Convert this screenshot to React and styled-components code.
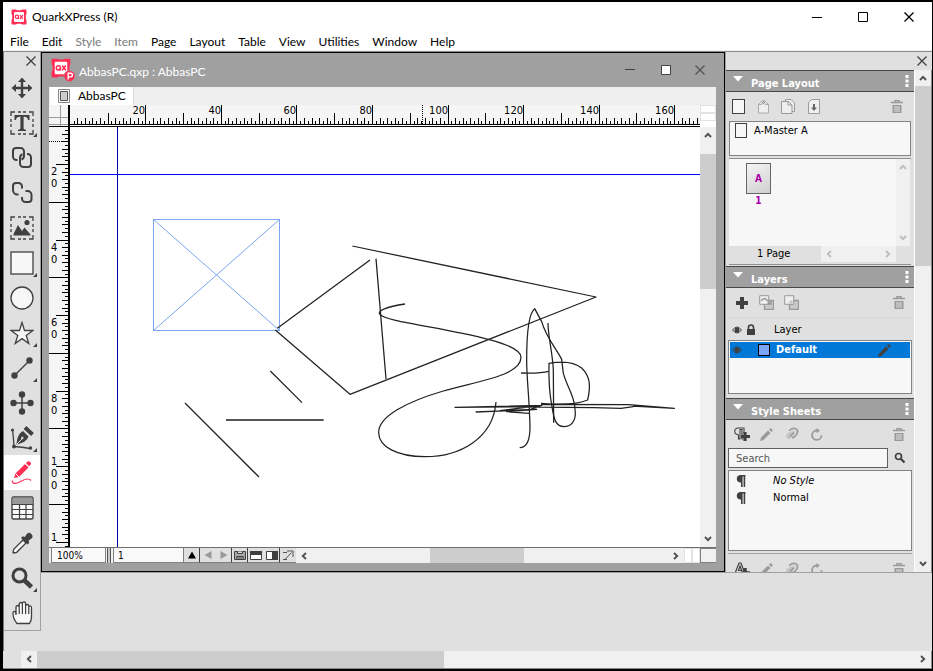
import React, { useEffect, useRef, useState } from "react";
import styled, { createGlobalStyle } from "styled-components";

const Global = createGlobalStyle`
  *, *::before, *::after { box-sizing: border-box; }
  html, body { margin: 0; padding: 0; background: #000; }
  button, input { font: inherit; color: inherit; border: 0; padding: 0; margin: 0; background: none; border-radius: 0; }
  ul { list-style: none; margin: 0; padding: 0; }
  h2, p { margin: 0; }
  svg { display: block; }
`;

const ui = `"Lato", "Open Sans", sans-serif`;
const panelFont = `"DejaVu Sans Condensed", "DejaVu Sans", sans-serif`;
const ink = "#404040";
const dim = "#9a9a9a";

const AppWindow = styled.div`
  display: flex;
  flex-direction: column;
  height: 100vh;
  min-height: 640px;
  border: solid #000;
  border-width: 2px 1px 2px 3px;
  background: #e0e0e0;
  font: 12px/16px ${ui};
  color: #000;
  overflow: hidden;
`;

const TitleBar = styled.header`
  display: flex;
  align-items: center;
  height: 29px;
  padding-left: 8px;
  background: #fff;
  flex: none;
`;

const WindowTitle = styled.span`
  flex: 1;
  padding-left: 5px;
`;

const CaptionButton = styled.button`
  display: grid;
  place-items: center;
  width: 46px;
  height: 29px;
`;

const MenuBar = styled.nav`
  display: flex;
  align-items: center;
  gap: 13px;
  height: 20px;
  padding: 2px 0 0 7px;
  background: #fff;
  border-bottom: 1px solid #f0f0f0;
  flex: none;
`;

const MenuItem = styled.button`
  color: ${(p) => (p.disabled ? "#7a7a7a" : "#000")};
`;

const Client = styled.div`
  display: flex;
  align-items: flex-start;
  flex: 1;
  min-height: 0;
  border-top: 1px solid #8c8c8c;
  border-left: 1px solid #777;
`;

const Toolbox = styled.div`
  display: flex;
  flex-direction: column;
  width: 37px;
  border-right: 1px solid #a0a0a0;
  border-bottom: 1px solid #a0a0a0;
  flex: none;
`;

const CloseRow = styled.div`
  display: flex;
  justify-content: flex-end;
  align-items: center;
  height: 18px;
  padding: 0 ${(p) => p.$inset}px;
  flex: none;
`;

const PlainButton = styled.button`
  display: grid;
  place-items: center;
`;

const Tool = styled.button`
  position: relative;
  display: grid;
  place-items: center;
  height: 35px;
  padding-right: 1px;
  background: ${(p) => (p.$active ? "#fff" : "transparent")};
  ${(p) =>
    p.$more &&
    `&::after {
      content: "";
      position: absolute;
      right: 3px;
      bottom: 3px;
      border-left: 4px solid transparent;
      border-bottom: 4px solid ${ink};
    }`}
`;

const Main = styled.div`
  display: flex;
  flex-direction: column;
  flex: 1;
  align-self: stretch;
  min-width: 0;
`;

const Workspace = styled.div`
  display: flex;
  flex: 1;
  min-height: 0;
  border-bottom: 1px solid #a0a0a0;
`;

const Desk = styled.div`
  height: 78px;
  flex: none;
`;

const DocWindow = styled.section`
  display: flex;
  flex-direction: column;
  flex: 1;
  min-width: 0;
  border: 1px solid #000;
  background: #a0a0a0;
  padding: 0 8px 8px 7px;
`;

const DocTitle = styled.div`
  display: flex;
  align-items: center;
  height: 34px;
  color: #fff;
  padding-left: 2px;
  flex: none;
`;

const DocName = styled(WindowTitle)`
  padding-top: 3px;
  padding-left: 4px;
`;

const DocButton = styled(CaptionButton)`
  width: 36px;
  height: 34px;
  &:last-child { width: 32px; }
`;

const TabRow = styled.div`
  display: flex;
  height: 18px;
  padding-left: 1px;
  background: #efefef;
  flex: none;
`;

const Tab = styled.button`
  display: flex;
  align-items: center;
  gap: 8px;
  padding: 0 7px 0 8px;
  background: #fff;
  border-right: 1px solid #d8d8d8;
`;

const DocGrid = styled.div`
  display: grid;
  grid-template: 22px 1fr / 21px 1fr 16px;
  flex: 1;
  min-height: 0;
  background: #f5f5f5;
`;

const RulerCell = styled.div`
  overflow: hidden;
  min-width: 0;
  min-height: 0;
  contain: size;
`;

const Canvas = styled.div`
  overflow: hidden;
  min-height: 0;
  background: #fff;
  contain: size;
`;

const RulerText = styled.text`
  font: 11px ${panelFont};
`;

const Splits = styled.div`
  display: grid;
  grid-template: ${(p) => (p.$across ? "1fr / 8px 8px" : "8px 8px / 1fr")};
  background: #fff;
  flex: none;
`;

const Split = styled.span`
  border: 1px solid #e2e2e2;
`;

const VScroll = styled.div`
  display: flex;
  flex-direction: column;
  width: ${(p) => p.$size || 16}px;
  background: #f0f0f0;
  min-height: 0;
  flex: none;
`;

const HScroll = styled.div`
  display: flex;
  height: ${(p) => p.$size || 15}px;
  background: #f0f0f0;
  min-width: 0;
  flex: 1;
`;

const Arrow = styled.button`
  display: grid;
  place-items: center;
  width: 100%;
  max-width: 16px;
  height: 16px;
  color: ${(p) => (p.disabled ? "#bdbdbd" : "#505050")};
  flex: none;
`;

const Track = styled.div`
  display: flex;
  flex-direction: ${(p) => (p.$across ? "row" : "column")};
  flex: 1;
  min-width: 0;
  min-height: 0;
`;

const Lead = styled.span`
  flex: ${(p) => p.$part} 1 0;
`;

const Thumb = styled.span`
  flex: ${(p) => p.$part} 1 0;
  background: #cdcdcd;
`;

const StatusBar = styled.div`
  display: flex;
  height: 16px;
  border-top: 1px solid #6e6e6e;
  background: #f0f0f0;
  font: 10px/14px ${panelFont};
  flex: none;
`;

const ZoomField = styled.input`
  width: 55px;
  margin-left: 2px;
  padding: 1px 0 0 5px;
  border: 1px solid #808080;
  border-top: 0;
  background: #f9f9f9;
`;

const Divider = styled.span`
  width: 4px;
  margin: 0 2px 0 1px;
  border: solid #555;
  border-width: 0 1px;
  background: #c8c8c8;
`;

const PageField = styled.input`
  width: 71px;
  padding: 1px 0 0 4px;
  border: 1px solid #808080;
  border-top: 0;
  background: #f9f9f9;
`;

const StatusButton = styled.button`
  display: grid;
  place-items: center;
  width: 16px;
  height: 15px;
  background: #e0e0e0;
  border-right: ${(p) => (p.$edge ? "1px solid #404040" : "0")};
  border-bottom: 1px solid #808080;
`;

const Corner = styled.span`
  width: 16px;
  border: 1px solid #808080;
  border-right: 0;
  background: #f0f0f0;
`;

const Palettes = styled.aside`
  display: flex;
  flex-direction: column;
  width: 207px;
  border-left: 1px solid #a0a0a0;
  flex: none;
`;

const PaletteScroll = styled.div`
  display: flex;
  flex: 1;
  min-height: 0;
  border-right: 1px solid #888;
`;

const PaletteStack = styled.div`
  flex: 1;
  height: 100%;
  overflow: hidden;
  font: 11px/14px ${panelFont};
  border-right: 1px solid #fff;
`;

const Panel = styled.section`
  display: flex;
  flex-direction: column;
  height: ${(p) => p.$height}px;
`;

const PanelHead = styled.header`
  display: flex;
  align-items: center;
  gap: 8px;
  height: 22px;
  padding: 0 5px 0 7px;
  border: solid #484848;
  border-width: 1px 0;
  background: #a0a0a0;
  color: #fff;
  flex: none;
`;

const PanelTitle = styled.h2`
  flex: 1;
  font: bold 11px/14px ${panelFont};
  padding-top: 6px;
`;

const Fold = styled.button`
  width: 10px;
  height: 10px;
  margin-bottom: 4px;
`;

const IconRow = styled.div`
  display: flex;
  align-items: center;
  gap: 8px;
  height: ${(p) => p.$height || 29}px;
  padding: 0 ${(p) => p.$right || 7}px 0 ${(p) => p.$left || 7}px;
  flex: none;
  > :last-child { margin-left: auto; }
`;

const IconButton = styled.button`
  display: grid;
  place-items: center;
  width: 17px;
  height: 18px;
`;

const MasterList = styled.ul`
  height: 35px;
  margin: 0 3px;
  border: 1px solid #808488;
  background: #f7f7f7;
`;

const MasterItem = styled.li`
  display: flex;
  align-items: center;
  gap: 7px;
  padding: 1px 5px;
`;

const PageArea = styled.div`
  display: grid;
  grid-template: 87px 16px / 92px 1fr 14px;
  margin: 2px 3px 0;
  padding: 0 1px 2px 0;
  border: solid #909090;
  border-width: 1px 0;
`;

const PageView = styled.div`
  grid-column: span 2;
  background: #f7f7f7;
  padding: 4px 17px;
`;

const PageThumb = styled.button`
  display: flex;
  flex-direction: column;
  align-items: center;
  color: #a800a8;
  font: bold 10px/14px ${panelFont};
`;

const PageSheet = styled.span`
  display: grid;
  place-items: center;
  width: 25px;
  height: 31px;
  border: 1px solid #666;
  background: linear-gradient(150deg, #f4f4f4, #cfcfcf);
`;

const PageCount = styled.p`
  padding-left: 28px;
  line-height: 16px;
`;

const LayerHead = styled.div`
  display: flex;
  align-items: center;
  gap: 4px;
  height: 23px;
  padding: 2px 0 0 4px;
  margin: 0 2px;
  border-top: 1px solid #d8d8d8;
  flex: none;
`;

const LayerLabel = styled.span`
  margin-left: 14px;
`;

const ListBox = styled.ul`
  height: ${(p) => p.$height}px;
  margin: 0 2px;
  border: 1px solid #808488;
  background: #f7f7f7;
  padding: 1px;
  flex: none;
`;

const LayerItem = styled.li`
  display: flex;
  align-items: center;
  height: 16px;
  padding: 0 19px 0 2px;
  background: #0078d7;
  color: #fff;
  font-weight: bold;
`;

const Swatch = styled.span`
  width: 12px;
  height: 12px;
  margin: 0 6px 0 16px;
  border: 1px solid #000;
  background: #7ba5f5;
`;

const LayerName = styled.span`
  flex: 1;
`;

const SearchRow = styled.label`
  display: flex;
  align-items: center;
  gap: 6px;
  height: 20px;
  margin: 0 2px 2px;
`;

const SearchInput = styled.input`
  width: 160px;
  height: 20px;
  padding: 0 7px;
  border: 1px solid #606060;
  background: #f7f7f7;
  &::placeholder { color: #555; opacity: 1; }
`;

const StyleItem = styled.li`
  display: flex;
  align-items: center;
  gap: 27px;
  height: 17px;
  padding-left: 6px;
  font-style: ${(p) => (p.$italic ? "italic" : "normal")};
`;

const Rule = styled.hr`
  width: calc(100% - 4px);
  margin: 1px 2px;
  border: 0;
  border-top: 1px solid #a0a0a0;
`;

const BottomBar = styled.div`
  display: flex;
  height: 18px;
  padding-left: 18px;
  border: solid #888;
  border-width: 0 1px 1px 0;
  flex: none;
`;

/* ---------- icons ---------- */

const Svg = ({ s = 24, w, h, children, ...rest }) => (
  <svg width={w || s} height={h || s} viewBox={`0 0 ${w || s} ${h || s}`} fill="none" stroke={ink} aria-hidden="true" {...rest}>
    {children}
  </svg>
);

const Chevron = ({ dir }) => {
  const d = { up: "M1 6l3-3.200 3 3.200", down: "M1 2l3 3.200 3-3.200", left: "M6 1L2.800 4 6 7", right: "M2 1l3.200 3-3.200 3" }[dir];
  return <Svg s={8} stroke="currentColor" strokeWidth="1.900"><path d={d} /></Svg>;
};

const Cross = ({ s = 10, color = ink }) => (
  <Svg s={s} stroke={color} strokeWidth="1.3"><path d={`M.5 .5L${s - 0.5} ${s - 0.5}M${s - 0.5} .5L.5 ${s - 0.5}`} /></Svg>
);

const QxLogo = ({ s, badge }) => (
  <svg width={badge ? 24 : s} height={badge ? 24 : s} viewBox={badge ? "0 0 24 24" : "0 0 16 16"} fill="none" aria-hidden="true">
    <g transform={badge ? "scale(1.25)" : undefined}>
      <path d="M1 .5h4l1 .7h4l1-.7h4l.5.5v4l-.7 1v4l.7 1v4l-.5.5h-4l-1-.7H6l-1 .7H1L.5 15v-4l.7-1V6l-.7-1V1z" fill="#ff2d55" />
      <rect x="3" y="3" width="10" height="10" rx="1" fill="#fff" />
      <circle cx="5.9" cy="7.8" r="1.7" stroke="#ff2d55" strokeWidth="1.2" />
      <path d="M6.500 8.500l1.400 1.400M8.900 6l3 3.800M11.900 6l-3 3.800" stroke="#ff2d55" strokeWidth="1.2" />
    </g>
    {badge && (
      <>
        <circle cx="18.500" cy="18" r="5.500" fill="#ff2d55" stroke="#a0a0a0" strokeWidth=".6" />
        <path d="M17.200 21.500v-6.300h2.400a1.800 1.800 0 010 3.700h-2" stroke="#fff" strokeWidth="1.4" />
      </>
    )}
  </svg>
);

const dashed = <path d="M1 5V1h4M8 1h3M13 1h3M19 1h4v4M23 8v3M23 13v3M23 19v4h-4M16 23h-3M11 23H8M5 23H1v-4M1 16v-3M1 11V8" strokeWidth="1.3" />;

const toolIcons = {
  Item: (
    <Svg strokeWidth="2.4">
      <path d="M12 4v16M4 12h16" />
      <path d="M12 1.500l4 4.500H8zM12 22.500l-4-4.500h8zM1.500 12l4.500-4v8zM22.500 12l-4.500-4v8z" fill={ink} stroke="none" />
    </Svg>
  ),
  "Text Content": (
    <Svg>
      {dashed}
      <path d="M4.500 4h15v5h-1.500c-.4-2.500-1-3.300-4.400-3.300v11c0 1.600.7 1.900 2.400 2V20H8v-1.300c1.700-.1 2.400-.4 2.400-2v-11C7 5.700 6.400 6.500 6 9H4.500z" fill={ink} stroke="none" />
    </Svg>
  ),
  "Text Linking": (
    <Svg strokeWidth="2">
      <path d="M7.500 14H6.500A3.500 3.500 0 013 10.500V5a3 3 0 013-3h4.500A3.500 3.500 0 0114 5.500V10a4 4 0 01-2.500 3.500" />
      <path d="M17 8h.5a3.500 3.500 0 013.500 3.500V18a3 3 0 01-3 3h-4.500a3.500 3.500 0 01-3.500-3.500V12a4 4 0 012.500-3.800" />
    </Svg>
  ),
  "Text Unlinking": (
    <Svg strokeWidth="2">
      <path d="M8.500 13.500h-1A4.500 4.500 0 013 9V5a3 3 0 013-3h2.500A3.500 3.500 0 0112 5.500v2" />
      <path d="M12 16v1.500a3.500 3.500 0 003.500 3.500h3a3 3 0 003-3v-4a4 4 0 00-4-4H15.500" />
    </Svg>
  ),
  "Picture Content": (
    <Svg>
      {dashed}
      <path d="M3.500 19.500v-1.500l4.500-9 4 6 2.500-3.500 6 7v1z" fill={ink} stroke="none" />
      <circle cx="17" cy="6.500" r="2.600" fill={ink} stroke="none" />
    </Svg>
  ),
  "Rectangle Box": <Svg><rect x="1" y="1" width="22" height="22" fill="#f7f7f7" strokeWidth="1.300" /></Svg>,
  "Oval Box": <Svg><circle cx="12" cy="12" r="11" fill="#f7f7f7" strokeWidth="1.300" /></Svg>,
  Starburst: <Svg><path d="M12 1.500l2.500 8h8.500l-6.800 5 2.600 8L12 17.600 5.200 22.500l2.600-8L1 9.500h8.500z" fill="#f7f7f7" strokeWidth="1.300" /></Svg>,
  Line: (
    <Svg>
      <path d="M4.500 19.500l15-15" strokeWidth="1.500" />
      <circle cx="4.500" cy="19.500" r="3.200" fill={ink} stroke="none" /><circle cx="19.500" cy="4.500" r="3.200" fill={ink} stroke="none" />
    </Svg>
  ),
  "Point Select": (
    <Svg strokeWidth="1.500">
      <path d="M12 3v18M3 12h18" />
      <g fill={ink} stroke="none"><circle cx="12" cy="3.500" r="3.200" /><circle cx="12" cy="20.500" r="3.200" /><circle cx="3.500" cy="12" r="3.200" /><circle cx="20.500" cy="12" r="3.200" /></g>
    </Svg>
  ),
  "Bezier Pen": (
    <Svg>
      <path d="M2.500 3.500q1 8 1.500 17 8 .5 16 2" strokeWidth="1.300" />
      <path d="M6.500 18.500C7 12 8.500 7.500 13 5l5.500 5.500c-1.500 4.500-6 6.500-12 8z" fill={ink} stroke="none" />
      <path d="M7 18l5-5" stroke="#e0e0e0" /><circle cx="12.300" cy="12" r="1.200" fill="#e0e0e0" stroke="none" />
      <path d="M15 1.500l7.500 7" strokeWidth="4" />
      <g fill={ink} stroke="none"><circle cx="2.500" cy="4" r="1.600" /><circle cx="4" cy="20.500" r="2" /><circle cx="20.500" cy="22" r="1.700" /></g>
    </Svg>
  ),
  "Freehand Drawing": (
    <Svg stroke="#ff2d55">
      <path d="M4 17l1.500-4.500L15 3l3.500 3.500L9 16z" fill="#ff2d55" stroke="none" />
      <path d="M16 2l1.700-1.500q1.300-.7 2.500.6t.5 2.400L19 5.300z" fill="#ff2d55" stroke="none" />
      <path d="M5.500 12.500L9 16" stroke="#fff" /><path d="M2.500 19.500c-1 4 4 3.500 8 1 4-2.300 8-4 10.500-1" strokeWidth="1.200" />
    </Svg>
  ),
  Table: (
    <Svg>
      <rect x="2" y="1" width="21" height="22" rx="1.500" fill="#f9f9f9" strokeWidth="1.400" />
      <path d="M2.700 1.700h19.600V8H2.700z" fill="#999" stroke="none" />
      <path d="M2 8.500h21M2 13.500h21M2 18.500h21M9.500 8v15M16 8v15" strokeWidth="1.200" />
    </Svg>
  ),
  "Color Picker": (
    <Svg>
      <path d="M3 21.500l.7-3.200L13 9l3 3-9.300 9.300-3.200.7z" fill="#f7f7f7" strokeWidth="1.300" />
      <path d="M11 7l1.800-1.800 2 .8 2-3a3.200 3.200 0 014.700 4.500l-3 2.200.8 2-1.800 1.800z" fill={ink} stroke="none" />
    </Svg>
  ),
  Zoom: <Svg><circle cx="9.500" cy="9.500" r="6.500" strokeWidth="3" /><path d="M14 14l7.500 7" strokeWidth="4.500" /></Svg>,
  Pan: (
    <Svg>
      <path d="M7 22.500c-2.500-3-4-7-4-10 0-3 2.500-2.500 3 0V6c0-2 3.200-2 3.200 0V3c0-2 3.200-2 3.200 0v-.5c0-2 3.200-2 3.200 0V5c0-2 3.200-2 3.200 0v1c0-1.500 2.700-1.500 2.700.5V16c0 3-1 5-2 6.500z" fill="#f7f7f7" strokeWidth="1.300" />
      <path d="M6 12v2M9.200 5v8M12.400 3v10M15.600 4v9M18.800 6v7" strokeWidth="1.200" />
    </Svg>
  ),
};

const tools = [
  ["Item"], ["Text Content", true], ["Text Linking"], ["Text Unlinking"], ["Picture Content"], ["Rectangle Box", true],
  ["Oval Box"], ["Starburst", true], ["Line", true], ["Point Select"], ["Bezier Pen", true], ["Freehand Drawing"],
  ["Table"], ["Color Picker"], ["Zoom", true], ["Pan"],
];

const Trash = () => (
  <Svg w={12} h={13} stroke={dim}>
    <path d="M0 2.500h12M4 2.500V.5h4v2" strokeWidth="1.500" />
    <path d="M1.500 5h9v8h-9z" fill={dim} stroke="none" /><path d="M4 6v6M6 6v6M8 6v6" stroke="#e0e0e0" />
  </Svg>
);
const Pencil = ({ color = dim }) => (
  <Svg s={13}>
    <path d="M0 13l1-3.500L8 2.500 10.500 5l-7 7zM9 1.500l1-1q.8-.6 1.600.2l.7.7q.8.900 0 1.600l-1 1z" fill={color} stroke="none" />
  </Svg>
);
const Duplicate = () => (
  <Svg s={14} stroke={dim} strokeWidth="1.600">
    <path d="M4 3.500Q9-.5 12 2.500q2 3.500-2 7L7 11" fill="#d4d4d4" />
    <path d="M1 10q-.5-3 4-5l3-.5 1 3-4 4.500q-3 .5-4-2z" fill="#c4c4c4" stroke="none" /><path d="M5 9.500l4-4" />
  </Svg>
);
const Refresh = () => (
  <Svg s={13} stroke={dim} strokeWidth="1.800"><path d="M7.500 2.500H6.500a4.700 4.700 0 105 4.700" /><path d="M6.500 0v5.200L10 2.500z" fill={dim} stroke="none" /></Svg>
);
const Plus = () => <Svg s={12} strokeWidth="4"><path d="M6 0v12M0 6h12" /></Svg>;
const Eye = () => (
  <Svg w={10} h={8}><path d="M.5 4q4.500-6 9 0-4.500 6-9 0z" /><circle cx="5" cy="4" r="2.500" fill={ink} stroke="none" /></Svg>
);
const Lock = () => <Svg w={10} h={12}><rect x="1" y="5" width="8" height="6" fill={ink} stroke="none" /><path d="M2.500 5V3.500a2.500 2.500 0 015 0V5" strokeWidth="1.600" /></Svg>;
const Kebab = () => <Svg w={4} h={12} fill="#fff" stroke="none"><path d="M.5 0h3v3h-3zM.5 4.500h3v3h-3zM.5 9h3v3h-3z" /></Svg>;
const Pilcrow = () => (
  <Svg w={10} h={12}><path d="M9.500 0H4a3.800 3.800 0 000 7.500h1V12h1.600V1.600h1V12h1.600V1.600h.3z" fill={ink} stroke="none" /></Svg>
);
const NewPara = () => (
  <Svg w={17} h={15}>
    <path d="M5.500 7.500V12h1.500V2.500h2V12h1M10 1H5a3.200 3.200 0 000 6.500M8 1h3v5" strokeWidth="1.100" /><path d="M12 5v9M8 9.500h9" strokeWidth="3.200" />
  </Svg>
);
const NewChar = () => (
  <Svg w={17} h={15}><path d="M1 14L6 1h2l4 11M1 14h3l1-3h5M5.500 8.500h3.200L7 4z" strokeWidth="1.200" /><path d="M12 6v9M8 11h9" strokeWidth="3.500" /></Svg>
);
const Glass = () => <Svg s={12} strokeWidth="1.700"><circle cx="4.500" cy="4.500" r="3" /><path d="M6.500 6.500l4 4" strokeWidth="2.300" /></Svg>;
const Blank = ({ w = 13, h = 15 }) => <Svg w={w} h={h}><rect x=".5" y=".5" width={w - 1} height={h - 1} fill="#f7f7f7" /></Svg>;
const FacingPage = () => <Svg w={12} h={15} stroke="#aaa"><path d="M.5 5.500l4-4h2l4 4v8.500H.5zM.5 5.500h3l2-4 2 4h3M5.500 1.500v4" fill="#efefef" /></Svg>;
const CopyPages = () => <Svg s={15} stroke={dim}><path d="M4.500 3V.500H10l3.500 3.500v8.500H11" fill="#eee" /><path d="M.5 2.500h7l3.500 3.500v8.500H.5zM7 2.500V6h4" fill="#eee" /></Svg>;
const Import = () => <Svg w={12} h={15} stroke={dim}><path d="M3.500 .5h8v14H.5v-11z" fill="#efefef" /><path d="M5 5h2v3.500h2L6 12 3 8.500h2z" fill="#666" stroke="none" /></Svg>;
const MoveLayer = ({ merge }) => (
  <Svg s={15} stroke={dim}>
    <path d="M5.500 5.500h9v9h-9z" fill="#c8c8c8" strokeWidth="1.300" /><path d="M.7 .7h9v8.600h-9z" fill="#eee" />
    {merge ? <path d="M7 5.500v4M5.500 7h4" strokeDasharray="1 1" /> : <path d="M2 6q3-4 6-1l3 3.500M12 5v4H8" strokeWidth="1.400" />}
  </Svg>
);

/* ---------- rulers and artwork ---------- */

const UNIT = 3.777;

function useSize() {
  const ref = useRef(null);
  const [size, setSize] = useState([0, 0]);
  useEffect(() => {
    const read = () => setSize([ref.current.clientWidth, ref.current.clientHeight]);
    const watch = new ResizeObserver(read);
    watch.observe(ref.current);
    read();
    return () => watch.disconnect();
  }, []);
  return [ref, size];
}

const TopRuler = () => {
  const [ref, [width]] = useSize();
  const ticks = [];
  const labels = [];
  for (let i = 1; i * UNIT < width; i++) {
    const x = Math.round(i * UNIT - 0.2);
    const len = i % 20 === 0 ? 19 : i % 10 === 0 ? 11 : i % 2 === 0 ? 6 : 3;
    ticks.push(`M${x + 0.5} 19v-${len}`);
    if (i % 20 === 0) labels.push([x, i]);
  }
  return (
    <RulerCell ref={ref}>
      <svg width={width} height="22" aria-hidden="true">
        {labels.map(([x, i]) => <RulerText key={i} x={x} y="9" textAnchor="end">{i}</RulerText>)}
        <path d={ticks.join("")} stroke="#000" />
        <path d="M352.500 0v19" stroke="#000" strokeDasharray="1 1" />
        <path d="M0 20.500h4000" stroke="#fff" />
        <path d="M0 19.500h4000M0 21.500h4000" stroke="#000" />
      </svg>
    </RulerCell>
  );
};

const SideRuler = () => {
  const [ref, [, height]] = useSize();
  const ticks = [];
  const labels = [];
  for (let i = 11; i * UNIT - 39 < height; i++) {
    const y = Math.round(i * UNIT - 38.5);
    const len = i % 20 === 0 ? 12 : i % 10 === 0 ? 19 : i % 2 === 0 ? 6 : 3;
    ticks.push(`M19 ${y + 0.5}h-${len}`);
    if (i % 20 === 0) {
      const top = y + (i < 100 ? 11 : -1);
      String(i).split("").forEach((c, k) => {
        if (top + k * 12 <= height) labels.push([top + k * 12, c, `${i}-${k}`]);
      });
    }
  }
  return (
    <RulerCell ref={ref}>
      <svg width="21" height={height} aria-hidden="true">
        {labels.map(([y, c, k]) => <RulerText key={k} x="2" y={y}>{c}</RulerText>)}
        <path d={ticks.join("")} stroke="#000" />
        <path d="M0 14.500h19" stroke="#000" strokeDasharray="1 1" />
        <path d="M20 0v4000" stroke="#000" strokeWidth="2" />
      </svg>
    </RulerCell>
  );
};

const Artwork = () => (
  <svg width="100%" height="100%" fill="none" role="img" aria-label="Page artwork">
    <path d="M47.500 0v4000" stroke="#0000a8" />
    <path d="M0 47.500h4000" stroke="#0000ff" />
    <g transform="translate(-70 -127)">
      <path d="M153.500 219.500h126v111h-126zM153.500 219.500l126 111M279.500 219.500l-126 111" stroke="#7aa5f0" />
      <g transform="translate(260 230) scale(.33333)" stroke="#222" strokeWidth="3.800" strokeLinejoin="round">
        <path d="M277 48L1008 201 270 493 46 300M52 295L330 90M348 86l30 361M31 423l95 95M-225 519L-3 741" />
        <path d="M-102 570H191" stroke="#555" strokeWidth="5.500" />
        <path d="M435 222C380 230 350 242 360 253 375 275 560 293 685 328 750 345 783 362 783 382 783 440 640 455 550 483 440 515 355 560 356 608 357 650 410 680 495 680 600 680 700 625 708 516" />
        <path d="M779 653C800 653 810 635 810 590 808 500 800 450 800 390 800 320 805 250 824 236L845 275C860 325 885 350 905 388L910 430C925 480 945 500 946 550 946 575 932 590 912 590 888 590 882 570 876 530 866 480 866 440 867 400 920 390 950 402 965 414 992 440 992 470 983 510 950 525 880 523 843 520" />
        <path d="M864 279C864 320 878 370 880 420L881 578M783 429C820 430 845 430 866 424" />
        <path d="M845 526L585 532C700 530 900 530 1083 535L1120 530M843 523l264 1 136 11-123-7M647 546l159-6 39-14-125 16 110-4-90 7 68 5" />
      </g>
    </g>
  </svg>
);

const CornerMark = () => <svg width="21" height="22" aria-hidden="true"><path d="M11.500 0v21M0 12.500h20M0 19.500h20" stroke="#999" /><path d="M20 0v22" stroke="#000" strokeWidth="2" /><path d="M0 21.500h21" stroke="#000" /></svg>;

const PanelHeader = ({ title }) => (
  <PanelHead>
    <Fold aria-label={`Collapse ${title}`}><Svg w={10} h={6} fill="#fff" stroke="none"><path d="M0 0h10L5 5.500z" /></Svg></Fold>
    <PanelTitle>{title}</PanelTitle>
    <PlainButton aria-label={`${title} menu`}><Kebab /></PlainButton>
  </PanelHead>
);

const StyleTools = ({ icon, kind }) => (
  <IconRow $height={28}>
    <IconButton aria-label={`New ${kind}`}>{icon}</IconButton>
    <IconButton aria-label={`Edit ${kind}`}><Pencil /></IconButton>
    <IconButton aria-label={`Duplicate ${kind}`}><Duplicate /></IconButton>
    <IconButton aria-label={`Update ${kind}`}><Refresh /></IconButton>
    <IconButton aria-label={`Delete ${kind}`}><Trash /></IconButton>
  </IconRow>
);

const menus = ["File", "Edit", "Style", "Item", "Page", "Layout", "Table", "View", "Utilities", "Window", "Help"];

export default function App() {
  return (
    <>
      <Global />
      <AppWindow>
        <TitleBar>
          <QxLogo s={16} />
          <WindowTitle>QuarkXPress (R)</WindowTitle>
          <CaptionButton aria-label="Minimize"><Svg s={10} stroke="#000"><path d="M0 5.500h10" /></Svg></CaptionButton>
          <CaptionButton aria-label="Maximize"><Svg s={10} stroke="#000"><path d="M.5 .5h9v9H.5z" /></Svg></CaptionButton>
          <CaptionButton aria-label="Close"><Cross color="#000" /></CaptionButton>
        </TitleBar>
        <MenuBar>
          {menus.map((m) => <MenuItem key={m} disabled={m === "Style" || m === "Item"}>{m}</MenuItem>)}
        </MenuBar>
        <Client>
          <Toolbox role="toolbar" aria-label="Tools">
            <CloseRow $inset={4}><PlainButton aria-label="Close tools"><Cross /></PlainButton></CloseRow>
            {tools.map(([name, more]) => (
              <Tool key={name} aria-label={name} $more={more} $active={name === "Freehand Drawing"}>{toolIcons[name]}</Tool>
            ))}
          </Toolbox>
          <Main>
            <Workspace>
              <DocWindow>
                <DocTitle>
                  <QxLogo badge />
                  <DocName>AbbasPC.qxp : AbbasPC</DocName>
                  <DocButton aria-label="Minimize document"><Svg s={10}><path d="M0 4.500h10" /></Svg></DocButton>
                  <DocButton aria-label="Maximize document"><Svg s={10}><path d="M.5 .5h9v9h-9z" fill="#fff" /></Svg></DocButton>
                  <DocButton aria-label="Close document"><Cross color="#555" /></DocButton>
                </DocTitle>
                <TabRow>
                  <Tab>
                    <Svg w={12} h={14} stroke="#888"><path d="M.5 .5h11v13H.5z" fill="#f5f5f5" /><path d="M2.500 2.500h7v9h-7z" fill="#ccc" stroke="#555" /></Svg>
                    AbbasPC
                  </Tab>
                </TabRow>
                <DocGrid>
                  <CornerMark />
                  <TopRuler />
                  <Splits><Split /><Split /></Splits>
                  <SideRuler />
                  <Canvas><Artwork /></Canvas>
                  <VScroll>
                    <Arrow aria-label="Scroll up"><Chevron dir="up" /></Arrow>
                    <Track><Lead $part={11} /><Thumb $part={135} /><Lead $part={242} /></Track>
                    <Arrow aria-label="Scroll down"><Chevron dir="down" /></Arrow>
                  </VScroll>
                </DocGrid>
                <StatusBar>
                  <ZoomField aria-label="View percentage" defaultValue="100%" />
                  <Divider />
                  <PageField aria-label="Page number" defaultValue="1" />
                  <StatusButton $edge aria-label="Go to page"><Svg s={8} fill="#000" stroke="none"><path d="M0 7.500L4 .5l4 7z" /></Svg></StatusButton>
                  <StatusButton aria-label="Previous page"><Svg s={8} fill={dim} stroke="none"><path d="M7.500 0L.5 4l7 4z" /></Svg></StatusButton>
                  <StatusButton $edge aria-label="Next page"><Svg s={8} fill={dim} stroke="none"><path d="M.5 0l7 4-7 4z" /></Svg></StatusButton>
                  <StatusButton $edge aria-label="Preview output"><Svg w={12} h={9}><path d="M.5 .5h11v8H.5z" fill="#aaa" /><path d="M3.500 .5v2h5v-2M2.500 5.500h7v1.500h-7z" fill="#ddd" /></Svg></StatusButton>
                  <StatusButton aria-label="Split horizontally"><Svg w={12} h={9}><path d="M.5 .5h11v8H.5z" fill="#fff" /><path d="M0 0h12v4H0z" fill={ink} stroke="none" /></Svg></StatusButton>
                  <StatusButton $edge aria-label="Split vertically"><Svg w={12} h={9}><path d="M.5 .5h11v8H.5z" fill="#fff" /><path d="M6 0h6v9H6z" fill={ink} stroke="none" /></Svg></StatusButton>
                  <StatusButton aria-label="Export"><Svg s={11} stroke="#555"><path d="M0 2.500h4M2 9.500l6.500-7M4 1h6v6M0 9.500h4" /></Svg></StatusButton>
                  <HScroll>
                    <Arrow aria-label="Scroll left"><Chevron dir="left" /></Arrow>
                    <Track $across><Lead $part={117} /><Thumb $part={93} /><Lead $part={142} /></Track>
                    <Arrow aria-label="Scroll right"><Chevron dir="right" /></Arrow>
                  </HScroll>
                  <Splits $across><Split /><Split /></Splits>
                  <Corner />
                </StatusBar>
              </DocWindow>
              <Palettes>
                <CloseRow $inset={5}><PlainButton aria-label="Close palettes"><Cross /></PlainButton></CloseRow>
                <PaletteScroll>
                  <PaletteStack>
                    <Panel $height={196}>
                      <PanelHeader title="Page Layout" />
                      <IconRow $left={4} $right={9}>
                        <IconButton aria-label="New single page"><Blank /></IconButton>
                        <IconButton aria-label="New facing page"><FacingPage /></IconButton>
                        <IconButton aria-label="Duplicate page"><CopyPages /></IconButton>
                        <IconButton aria-label="Import page"><Import /></IconButton>
                        <IconButton aria-label="Delete page"><Trash /></IconButton>
                      </IconRow>
                      <MasterList><MasterItem><Blank w={12} />A-Master A</MasterItem></MasterList>
                      <PageArea>
                        <PageView><PageThumb><PageSheet>A</PageSheet>1</PageThumb></PageView>
                        <VScroll $size={14}>
                          <Arrow disabled aria-label="Pages up"><Chevron dir="up" /></Arrow>
                          <Track />
                          <Arrow disabled aria-label="Pages down"><Chevron dir="down" /></Arrow>
                        </VScroll>
                        <PageCount>1 Page</PageCount>
                        <HScroll $size={16}>
                          <Arrow disabled aria-label="Pages left"><Chevron dir="left" /></Arrow>
                          <Track $across />
                          <Arrow disabled aria-label="Pages right"><Chevron dir="right" /></Arrow>
                        </HScroll>
                      </PageArea>
                    </Panel>
                    <Panel $height={132}>
                      <PanelHeader title="Layers" />
                      <IconRow>
                        <IconButton aria-label="New layer"><Plus /></IconButton>
                        <IconButton aria-label="Move item to layer"><MoveLayer /></IconButton>
                        <IconButton aria-label="Merge layers"><MoveLayer merge /></IconButton>
                        <IconButton aria-label="Delete layer"><Trash /></IconButton>
                      </IconRow>
                      <LayerHead><Eye /><Lock /><LayerLabel>Layer</LayerLabel></LayerHead>
                      <ListBox $height={54}>
                        <LayerItem><Eye /><Swatch /><LayerName>Default</LayerName><Pencil color={ink} /></LayerItem>
                      </ListBox>
                    </Panel>
                    <Panel $height={154}>
                      <PanelHeader title="Style Sheets" />
                      <StyleTools icon={<NewPara />} kind="paragraph style" />
                      <SearchRow><SearchInput aria-label="Search styles" placeholder="Search" /><Glass /></SearchRow>
                      <ListBox $height={81}>
                        <StyleItem $italic><Pilcrow />No Style</StyleItem>
                        <StyleItem><Pilcrow />Normal</StyleItem>
                      </ListBox>
                    </Panel>
                    <Rule />
                    <StyleTools icon={<NewChar />} kind="character style" />
                  </PaletteStack>
                  <VScroll>
                    <Arrow aria-label="Palettes up"><Chevron dir="up" /></Arrow>
                    <Track><Thumb $part={179} /><Lead $part={288} /></Track>
                    <Arrow aria-label="Palettes down"><Chevron dir="down" /></Arrow>
                  </VScroll>
                </PaletteScroll>
              </Palettes>
            </Workspace>
            <Desk />
          </Main>
        </Client>
        <BottomBar>
          <HScroll $size={17}>
            <Arrow aria-label="Scroll workspace left"><Chevron dir="left" /></Arrow>
            <Track $across><Thumb $part={407} /><Lead $part={470} /></Track>
            <Arrow aria-label="Scroll workspace right"><Chevron dir="right" /></Arrow>
          </HScroll>
        </BottomBar>
      </AppWindow>
    </>
  );
}
